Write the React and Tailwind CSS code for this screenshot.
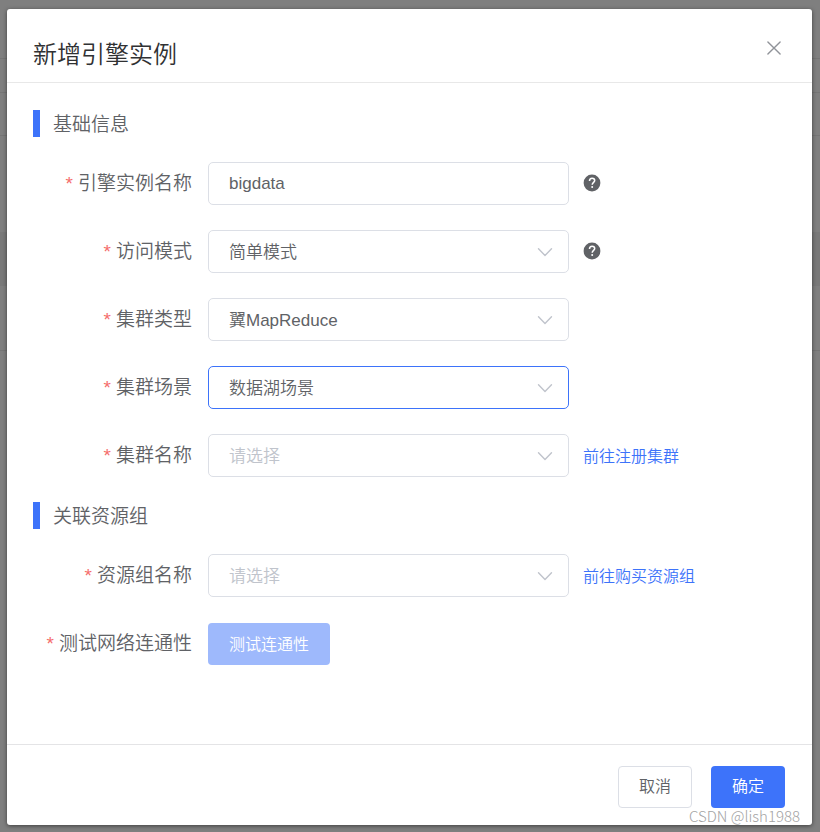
import React, { useState } from 'react'

const ChevronIcon = () => (
  <svg
    className="pointer-events-none absolute top-1/2 right-4 h-4 w-4 -translate-y-1/2 text-[#c0c4cc]"
    viewBox="0 0 16 16"
    fill="none"
    stroke="currentColor"
    strokeWidth="1.4"
    strokeLinecap="round"
    strokeLinejoin="round"
    aria-hidden="true"
  >
    <path d="M1.500 4.700 8 11.500l6.500-6.800" />
  </svg>
)

const HelpIcon = () => (
  <svg className="h-[18px] w-[18px] text-[#606266]" viewBox="0 0 18 18" fill="none" aria-hidden="true">
    <circle cx="9" cy="9" r="8.400" fill="currentColor" />
    <path d="M6.500 7C6.500 5.300 7.500 4.200 9.100 4.200s2.600 1 2.600 2.400c0 1.800-2.500 1.900-2.500 4.200" stroke="#fff" strokeWidth="1.500" />
    <circle cx="9.200" cy="13" r="1" fill="#fff" />
  </svg>
)

const CloseIcon = () => (
  <svg className="h-4 w-4" viewBox="0 0 16 16" fill="none" stroke="currentColor" strokeWidth="1.400" strokeLinecap="round" aria-hidden="true">
    <path d="M1.900 1.900l12.200 12.200M14.100 1.900L1.900 14.100" />
  </svg>
)

const SectionTitle = ({ children }) => (
  <h2 className="flex h-[27px] items-center border-l-[7px] border-[#3d73fa] pt-[3px] pl-[13px] text-[19px] text-[#606266]">
    {children}
  </h2>
)

const FormRow = ({ id, label, extra, children }) => (
  <div className="flex h-[43px] items-center">
    <label htmlFor={id} className="w-[159px] shrink-0 pt-[2px] text-right text-[19px] whitespace-nowrap text-[#606266]">
      <span className="mr-[5px] text-[#f56c6c]">*</span>
      {label}
    </label>
    <div className="ml-4 flex min-w-0 flex-1 items-center gap-[14px]">
      {children}
      {extra}
    </div>
  </div>
)

const SelectField = ({ id, options = [], placeholder, active }) => {
  const [value, setValue] = useState(options[0] || '')

  return (
    <div className="relative w-full max-w-[361px]">
      <select
        id={id}
        value={value}
        onChange={(e) => setValue(e.target.value)}
        className={`h-[43px] w-full appearance-none rounded-[5px] border bg-white pt-[2px] pr-10 pl-5 text-[17px] outline-none ${
          active ? 'border-[#3d73fa]' : 'border-[#dcdfe6]'
        } ${value ? 'text-[#606266]' : 'text-[#c0c4cc]'}`}
      >
        {placeholder && <option value="">{placeholder}</option>}
        {options.map((option) => (
          <option key={option} value={option}>{option}</option>
        ))}
      </select>
      <ChevronIcon />
    </div>
  )
}

const HelpButton = () => (
  <button type="button" aria-label="帮助" className="shrink-0 pb-[2px]">
    <HelpIcon />
  </button>
)

const TextLink = ({ children }) => (
  <a href="#" className="shrink-0 pt-[2px] text-[16px] text-[#3d73fa]">{children}</a>
)

// Dimmed table rows of the page behind the dialog
const PageBackdrop = () => (
  <div className="absolute inset-0 bg-[#7f7f7f]" aria-hidden="true">
    <div className="h-[59px] border-b border-[#757575]" />
    <div className="h-[34px] border-b border-[#757575]" />
    <div className="h-[43px] border-b border-[#757575]" />
    <div className="h-24" />
    <div className="h-[54px] bg-[#797979]" />
    <div className="h-[65px] border-b border-[#757575]" />
  </div>
)

const App = () => {
  const [name, setName] = useState('bigdata')

  return (
    <div className="relative flex min-h-screen flex-col pt-[9px] pr-2 pb-[7px] pl-[7px] font-['Liberation_Sans','Noto_Sans_CJK_SC',sans-serif] font-[350]">
      <PageBackdrop />

      <div
        role="dialog"
        aria-labelledby="dialog-title"
        className="relative flex flex-1 flex-col rounded-[3px] bg-white shadow-[0_1px_4px_rgba(0,0,0,0.5)]"
      >
        <header className="flex h-[74px] items-center justify-between border-b border-[#e8e8e8] pt-4 pr-[30px] pl-[26px]">
          <h1 id="dialog-title" className="pt-[2px] text-[24px] font-[350] text-[#303133]">新增引擎实例</h1>
          <button type="button" aria-label="关闭" className="mb-3 text-[#909399]">
            <CloseIcon />
          </button>
        </header>

        <form className="flex flex-1 flex-col gap-[25px] px-[26px] pt-[27px] pb-6" onSubmit={(e) => e.preventDefault()}>
          <SectionTitle>基础信息</SectionTitle>
          <FormRow id="name" label="引擎实例名称" extra={<HelpButton />}>
            <input
              id="name"
              type="text"
              value={name}
              onChange={(e) => setName(e.target.value)}
              className="h-[43px] w-full max-w-[361px] rounded-[5px] border border-[#dcdfe6] px-5 text-[17px] text-[#606266] outline-none"
            />
          </FormRow>
          <FormRow id="mode" label="访问模式" extra={<HelpButton />}>
            <SelectField id="mode" options={['简单模式']} />
          </FormRow>
          <FormRow id="type" label="集群类型">
            <SelectField id="type" options={['翼MapReduce']} />
          </FormRow>
          <FormRow id="scene" label="集群场景">
            <SelectField id="scene" options={['数据湖场景']} active />
          </FormRow>
          <FormRow id="cluster" label="集群名称" extra={<TextLink>前往注册集群</TextLink>}>
            <SelectField id="cluster" placeholder="请选择" />
          </FormRow>

          <SectionTitle>关联资源组</SectionTitle>
          <FormRow id="group" label="资源组名称" extra={<TextLink>前往购买资源组</TextLink>}>
            <SelectField id="group" placeholder="请选择" />
          </FormRow>
          <FormRow id="test" label="测试网络连通性">
            <button id="test" type="button" disabled className="h-[42px] rounded-[4px] bg-[#9eb9fc] px-[21px] pt-[2px] text-[16px] text-white">
              测试连通性
            </button>
          </FormRow>
        </form>

        <footer className="flex justify-end gap-[19px] border-t border-[#e4e4e6] pt-[21px] pr-[27px] pb-[17px]">
          <button type="button" className="h-[42px] rounded-[4px] border border-[#dcdfe6] bg-white px-5 text-[16px] text-[#606266]">
            取消
          </button>
          <button type="button" className="h-[42px] rounded-[4px] bg-[#3d73fa] px-[21px] text-[16px] text-white">
            确定
          </button>
        </footer>
      </div>

      <span className="absolute right-5 bottom-1 font-['Noto_Sans_CJK_SC',sans-serif] text-[15px] leading-6 font-light text-[#a3a3a3]">
        CSDN @lish1988
      </span>
    </div>
  )
}

export default App
